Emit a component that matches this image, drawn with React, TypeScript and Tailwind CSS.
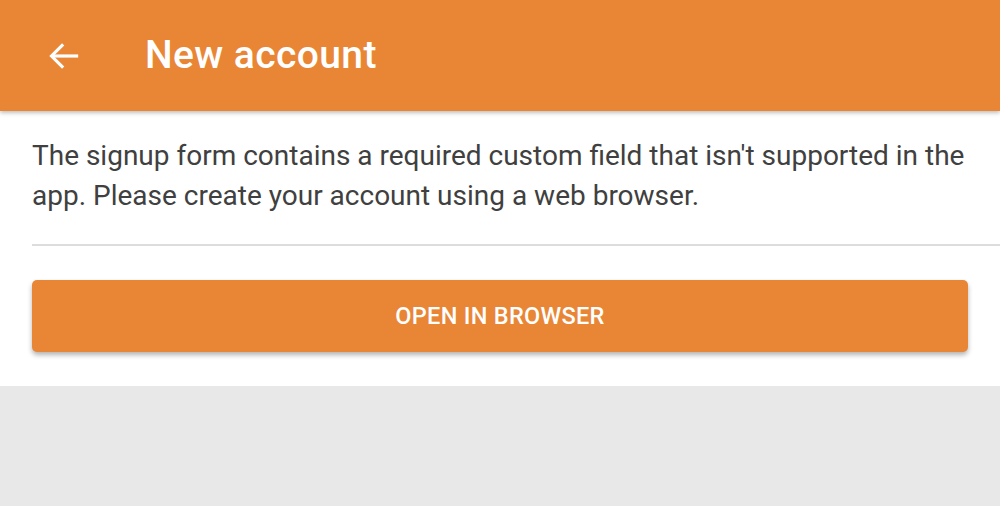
import React from "react";

export default function App() {
  return (
    <div className="w-[1000px] h-[506px] bg-[#e8e8e8] flex flex-col" style={{ fontFamily: "Roboto, 'Liberation Sans', sans-serif" }}>
      <div className="h-[111px] bg-[#e98635] flex items-center shrink-0 relative z-10 shadow-[0_2px_4px_rgba(0,0,0,0.25)]">
        <div className="w-[145px] flex items-center pl-[44px]">
          <svg width="40" height="40" viewBox="0 0 24 24" fill="none" stroke="#ffffff" strokeWidth="1.9">
            <path d="M20.5 12H4.5" />
            <path d="M11.5 5L4.5 12L11.5 19" />
          </svg>
        </div>
        <div className="text-white text-[39px] font-medium leading-none tracking-[0.4px]">New account</div>
      </div>
      <div className="bg-white flex flex-col">
        <div className="pl-[32px] pr-[24px] pt-[25px] pb-[28px] text-[28px] leading-[40px] text-[#404040]">
          The signup form contains a required custom field that isn't supported in the app. Please create your account using a web browser.
        </div>
        <div className="ml-[32px] h-[2px] bg-[#dddddd]" />
        <div className="px-[32px] pt-[34px] pb-[34px]">
          <div className="h-[72px] pt-[1px] rounded-[5px] bg-[#e98635] flex items-center justify-center text-white text-[23.5px] font-medium tracking-[0.3px] shadow-[0_3px_5px_rgba(0,0,0,0.3)]">
            OPEN IN BROWSER
          </div>
        </div>
      </div>
    </div>
  );
}
